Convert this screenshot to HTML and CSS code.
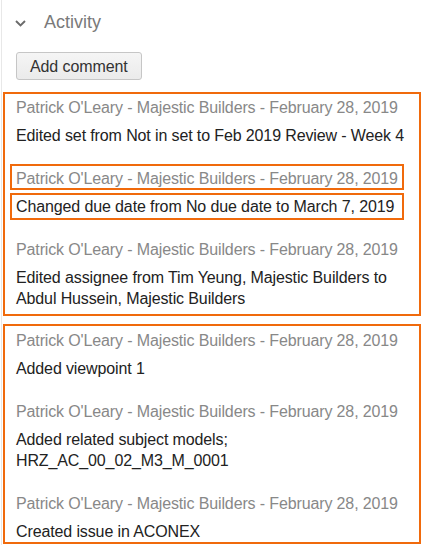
FILE: index.html
```html
<!DOCTYPE html>
<html>
<head>
<meta charset="utf-8">
<link rel="stylesheet" href="styles.css">
</head>
<body>
<div class="panel">
  <div class="section-head">
    <svg class="chev" width="11" height="10" viewBox="0 0 11 10"><path d="M1 3 L5.5 7.5 L10 3" fill="none" stroke="#6b6b6b" stroke-width="1.9"/></svg>
    <span class="section-title">Activity</span>
  </div>
  <button class="btn">Add comment</button>

  <div class="group g1">
    <div class="item">
      <div class="meta">Patrick O'Leary - Majestic Builders - February 28, 2019</div>
      <div class="body"><div class="text">Edited set from Not in set to Feb 2019 Review - Week 4</div></div>
    </div>
    <div class="item">
      <div class="meta hl">Patrick O'Leary - Majestic Builders - February 28, 2019</div>
      <div class="body hl"><div class="text">Changed due date from No due date to March 7, 2019</div></div>
    </div>
    <div class="item">
      <div class="meta">Patrick O'Leary - Majestic Builders - February 28, 2019</div>
      <div class="body"><div class="text">Edited assignee from Tim Yeung, Majestic Builders to Abdul Hussein, Majestic Builders</div></div>
    </div>
  </div>

  <div class="group g2">
    <div class="item">
      <div class="meta">Patrick O'Leary - Majestic Builders - February 28, 2019</div>
      <div class="body"><div class="text">Added viewpoint 1</div></div>
    </div>
    <div class="item">
      <div class="meta">Patrick O'Leary - Majestic Builders - February 28, 2019</div>
      <div class="body"><div class="text">Added related subject models;<br>HRZ_AC_00_02_M3_M_0001</div></div>
    </div>
    <div class="item">
      <div class="meta">Patrick O'Leary - Majestic Builders - February 28, 2019</div>
      <div class="body last"><div class="text">Created issue in ACONEX</div></div>
    </div>
  </div>
</div>
</body>
</html>
```

FILE: styles.css
```css
html, body {
  margin: 0;
  padding: 0;
  background: #ffffff;
}
body {
  font-family: "Liberation Sans", Arial, sans-serif;
  font-size: 16px;
  color: #222222;
  overflow: hidden;
}
.panel {
  margin-left: 1px;
  border-left: 1px solid #e8e8e8;
  height: 545px;
  box-sizing: border-box;
}
.section-head {
  display: flex;
  align-items: center;
  height: 44px;
  padding-left: 13px;
}
.chev {
  display: block;
  margin-right: 18px;
  margin-top: 2px;
}
.section-title {
  font-size: 18px;
  color: #7a7a7a;
}
.btn {
  display: block;
  margin: 8px 0 0 14px;
  height: 28px;
  padding: 1px 13px 0;
  font-family: "Liberation Sans", Arial, sans-serif;
  font-size: 16px;
  letter-spacing: -0.1px;
  color: #333333;
  background: linear-gradient(#f5f5f5, #ebebeb);
  border: 1px solid #c6c6c6;
  border-radius: 3px;
}
.group {
  width: 418px;
  margin-left: 1px;
  border: 2px solid #f06a0c;
  box-sizing: border-box;
  display: flex;
  flex-direction: column;
  gap: 19px;
}
.g1 {
  margin-top: 12px;
  padding: 1px 0 4px;
}
.g2 {
  margin-top: 8px;
  padding: 2px 0 0;
  height: 220px;
  overflow: hidden;
}
.item {
  display: flex;
  flex-direction: column;
  gap: 7px;
  margin-left: 7px;
  width: 390px;
}
.meta {
  height: 22px;
  line-height: 25px;
  padding-left: 4px;
  color: #888888;
  letter-spacing: -0.13px;
  white-space: nowrap;
}
.body {
  padding: 1px 0 1px 4px;
  line-height: 21px;
  color: #222222;
  letter-spacing: -0.12px;
}
.body .text {
  margin-right: -10px;
}
.body.last {
  padding-bottom: 0;
}
.hl {
  outline: 2px solid #f06a0c;
}
```
